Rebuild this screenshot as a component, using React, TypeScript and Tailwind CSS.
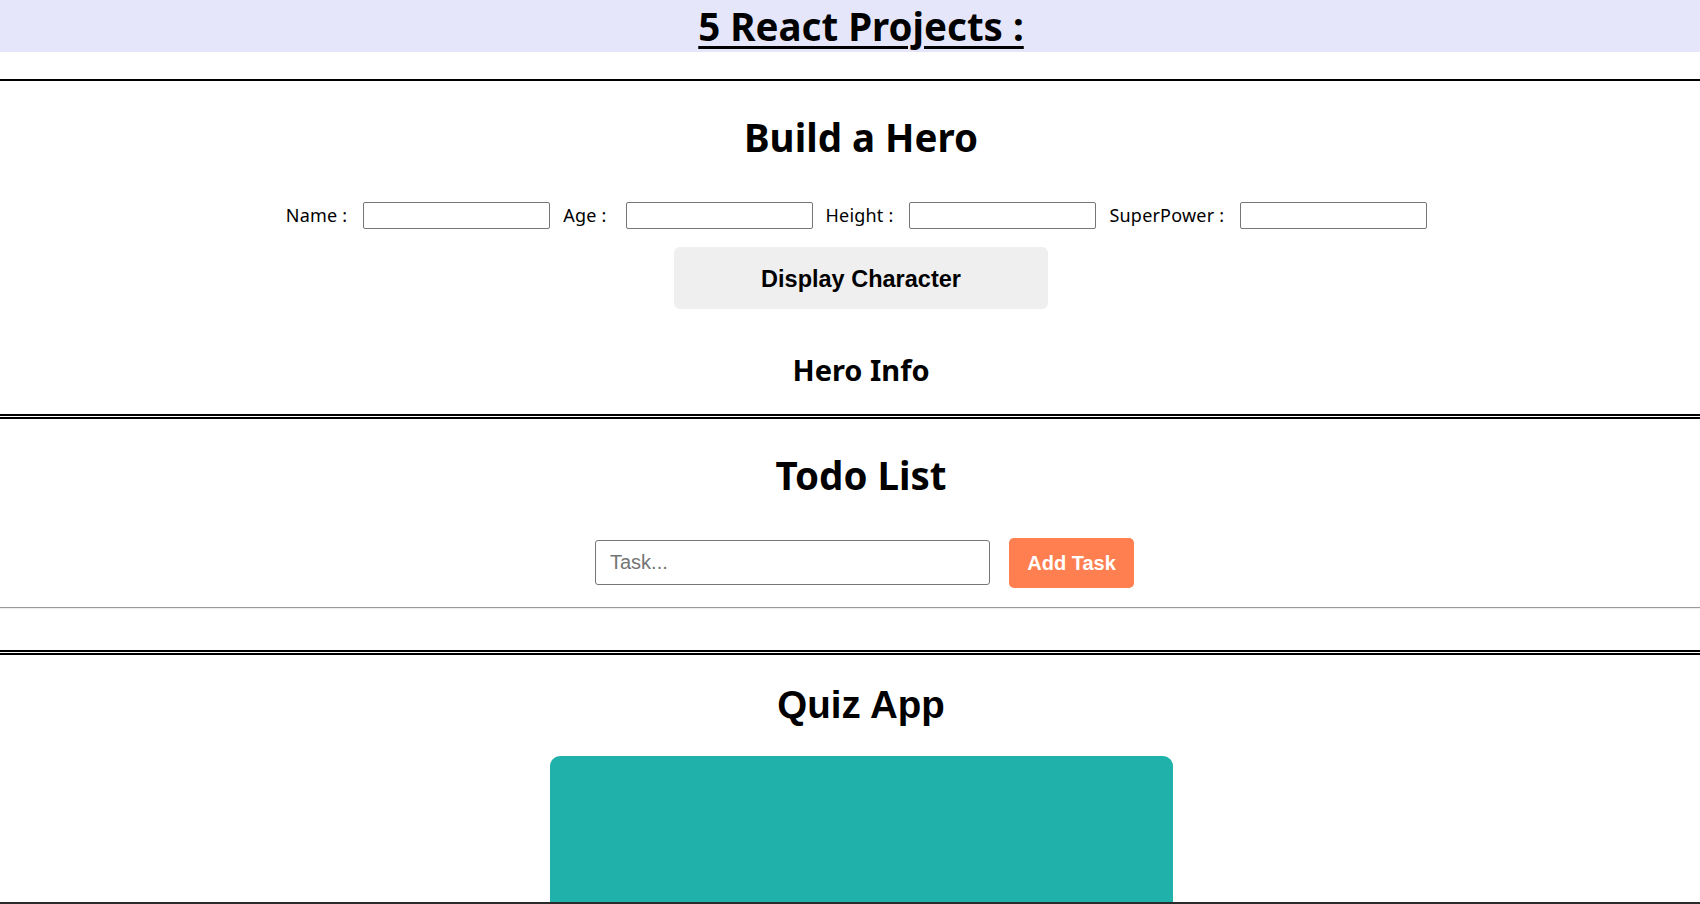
const labelCls = "text-[18px] mr-[16px] tracking-[0.2px]";
const heroInput = "w-[187px] h-[27px] border border-[#767676] rounded-[2px] mr-[13px] px-1 text-[15px] bg-white";

function HeroField({ label, extra = "" }: { label: string; extra?: string }) {
  return (
    <>
      <label className={`${labelCls} ${extra}`}>{label} :</label>
      <input type="text" className={heroInput} />
    </>
  );
}

export default function App() {
  return (
    <div className="w-full overflow-hidden bg-white text-black font-['Noto_Sans',sans-serif]">
      <div className="w-[1722px]">
        <h1 className="m-0 bg-[#e6e6fa] text-center text-[38.5px] font-bold leading-[52px] underline decoration-[3px] underline-offset-[5px]">
          5 React Projects :
        </h1>

        {/* Build a hero */}
        <div className="mt-[27px] border-t-2 border-b-2 border-black">
          <h1 className="mt-[30px] text-center text-[38.5px] font-bold leading-[52px]">Build a Hero</h1>
          <div className="mt-[39px] flex h-[27px] items-center justify-center pl-[4px]">
            <HeroField label="Name" />
            <HeroField label="Age" extra="pr-[3px]" />
            <HeroField label="Height" />
            <HeroField label="SuperPower" />
          </div>
          <button className="mx-auto mt-[18px] block h-[62px] w-[374px] rounded-[6px] bg-[#efefef] pt-[3px] text-[23.5px] font-bold font-['Liberation_Sans',Arial,sans-serif]">
            Display Character
          </button>
          <h2 className="mt-[41px] mb-[24px] text-center text-[29px] font-bold leading-[39.5px]">Hero Info</h2>
        </div>

        {/* Todo list */}
        <div className="mt-[1px] border-t-2 border-b-2 border-black">
          <h1 className="mt-[30px] text-center text-[38.5px] font-bold leading-[52px]">Todo List</h1>
          <div className="mt-[37px] flex h-[50px] items-center justify-center gap-[19px] pl-[7px]">
            <input
              type="text"
              placeholder="Task..."
              className="h-[45px] w-[395px] rounded-[3px] border border-[#767676] pl-[14px] text-[20px] font-['Liberation_Sans',Arial,sans-serif] placeholder:text-[#757575]"
            />
            <button className="h-[50px] w-[125px] rounded-[5px] bg-[#ff7f50] text-[20px] font-bold text-white font-['Liberation_Sans',Arial,sans-serif]">
              Add Task
            </button>
          </div>
          <hr className="mt-[19px] mb-[41px] border-t border-b border-t-[#9a9a9a] border-b-[#eeeeee]" />
        </div>

        {/* Quiz app */}
        <div className="mt-[1px] border-t-2 border-black">
          <h1 className="mt-[28px] text-center text-[38.5px] font-bold leading-[44px] font-['Liberation_Sans',Arial,sans-serif]">
            Quiz App
          </h1>
          <div className="mx-auto mt-[29px] h-[320px] w-[623px] rounded-[10px] bg-[#20b2aa]" />
        </div>
      </div>
      <div className="fixed bottom-0 left-0 h-[2px] w-full bg-[#2b2b2b]" />
    </div>
  );
}
